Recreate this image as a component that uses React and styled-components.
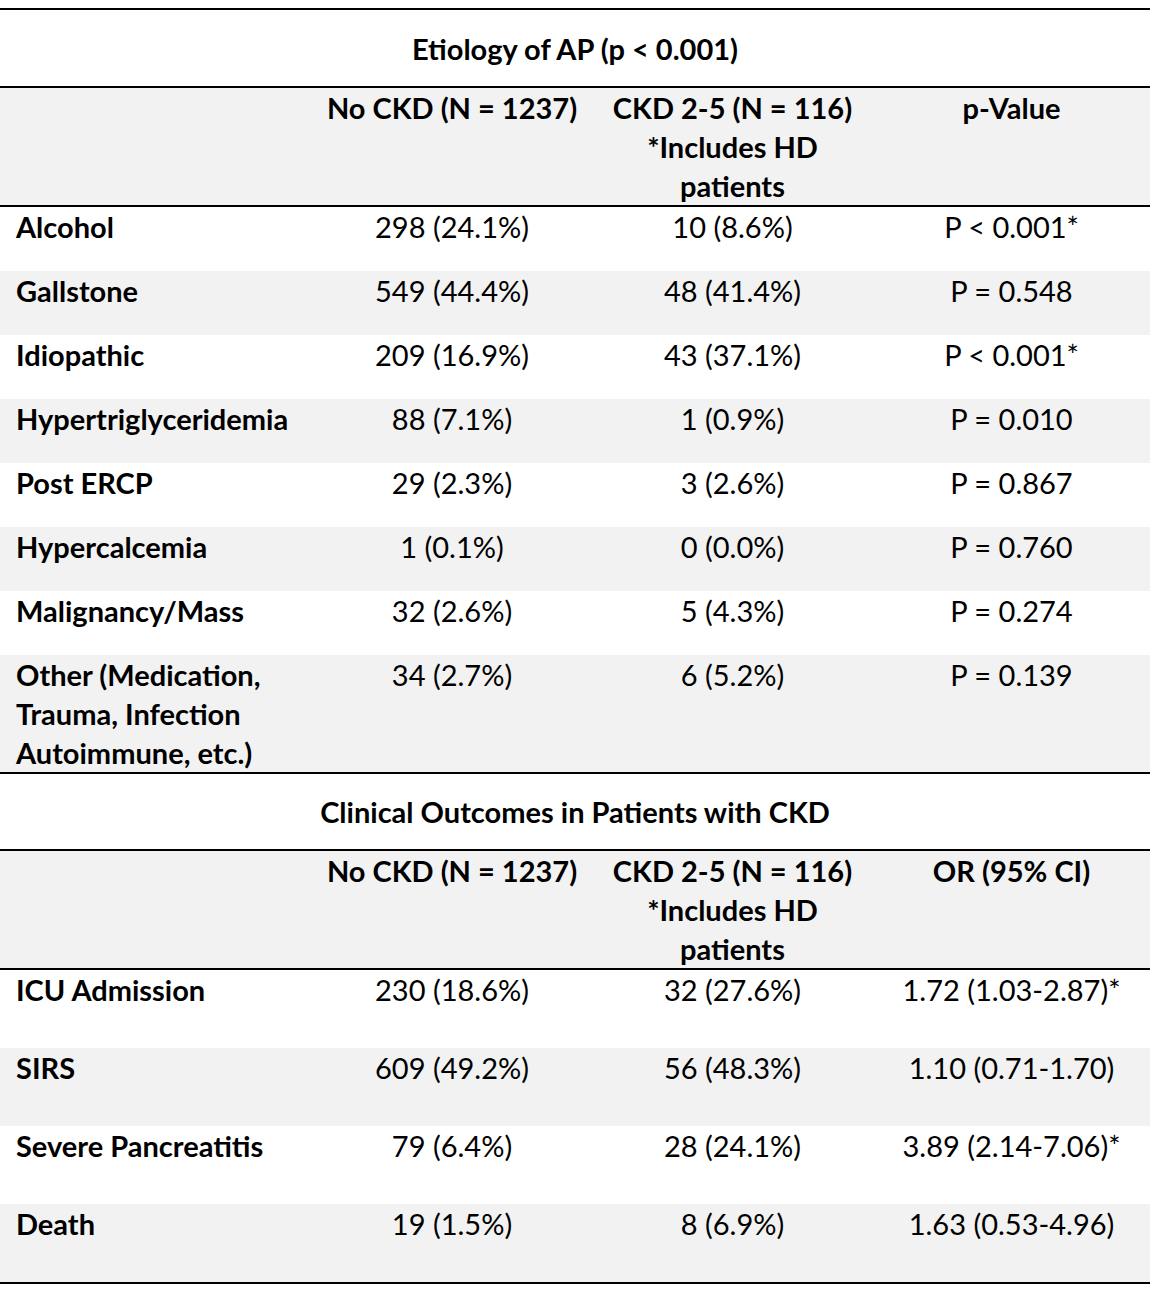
import styled, { createGlobalStyle } from "styled-components";

const GlobalStyle = createGlobalStyle`
  body {
    margin: 0;
    background: #ffffff;
    font-family: Lato, "Open Sans", sans-serif;
    color: #000000;
  }
`;

const Page = styled.div`
  width: 1150px;
  padding-top: 8px;
`;

const Section = styled.section`
  border-top: 2px solid #000;
`;

const Title = styled.div`
  height: ${(p) => p.$height}px;
  display: flex;
  align-items: center;
  justify-content: center;
  font-size: 29px;
  font-weight: 700;
  border-bottom: 2px solid #000;
`;

const Grid = styled.div`
  display: grid;
  grid-template-columns: 312px 280px 281px 1fr;
  background: ${(p) => (p.$shade ? "#f2f2f2" : "#ffffff")};
  min-height: ${(p) => p.$height}px;
  box-sizing: border-box;
  font-size: 29px;
  line-height: 39px;
`;

const HeadRow = styled(Grid)`
  border-bottom: 2px solid #000;
  font-weight: 700;
`;

const Label = styled.div`
  padding-left: 16px;
  font-weight: 700;
`;

const Cell = styled.div`
  text-align: center;
  white-space: nowrap;
`;

const Lines = ({ text }) =>
  text.split("\n").map((line, i) => <div key={i}>{line}</div>);

const etiology = [
  ["Alcohol", "298 (24.1%)", "10 (8.6%)", "P < 0.001*"],
  ["Gallstone", "549 (44.4%)", "48 (41.4%)", "P = 0.548"],
  ["Idiopathic", "209 (16.9%)", "43 (37.1%)", "P < 0.001*"],
  ["Hypertriglyceridemia", "88 (7.1%)", "1 (0.9%)", "P = 0.010"],
  ["Post ERCP", "29 (2.3%)", "3 (2.6%)", "P = 0.867"],
  ["Hypercalcemia", "1 (0.1%)", "0 (0.0%)", "P = 0.760"],
  ["Malignancy/Mass", "32 (2.6%)", "5 (4.3%)", "P = 0.274"],
  [
    "Other (Medication,\nTrauma, Infection\nAutoimmune, etc.)",
    "34 (2.7%)",
    "6 (5.2%)",
    "P = 0.139",
  ],
];

const outcomes = [
  ["ICU Admission", "230 (18.6%)", "32 (27.6%)", "1.72 (1.03-2.87)*"],
  ["SIRS", "609 (49.2%)", "56 (48.3%)", "1.10 (0.71-1.70)"],
  ["Severe Pancreatitis", "79 (6.4%)", "28 (24.1%)", "3.89 (2.14-7.06)*"],
  ["Death", "19 (1.5%)", "8 (6.9%)", "1.63 (0.53-4.96)"],
];

function Block({ title, titleHeight, lastHead, rows, rowHeight }) {
  return (
    <Section>
      <Title $height={titleHeight}>{title}</Title>
      <HeadRow $shade $height={118}>
        <div />
        <Cell>No CKD (N = 1237)</Cell>
        <Cell>
          <Lines text={"CKD 2-5 (N = 116)\n*Includes HD\npatients"} />
        </Cell>
        <Cell>{lastHead}</Cell>
      </HeadRow>
      {rows.map((r, i) => (
        <Grid key={r[0]} $shade={i % 2 === 1} $height={rowHeight}>
          <Label>
            <Lines text={r[0]} />
          </Label>
          <Cell>{r[1]}</Cell>
          <Cell>{r[2]}</Cell>
          <Cell>{r[3]}</Cell>
        </Grid>
      ))}
    </Section>
  );
}

export default function App() {
  return (
    <>
      <GlobalStyle />
      <Page>
        <Block
          title="Etiology of AP (p < 0.001)"
          titleHeight={76}
          lastHead="p-Value"
          rows={etiology}
          rowHeight={64}
        />
        <Block
          title="Clinical Outcomes in Patients with CKD"
          titleHeight={75}
          lastHead="OR (95% CI)"
          rows={outcomes}
          rowHeight={78}
        />
        <Section />
      </Page>
    </>
  );
}
